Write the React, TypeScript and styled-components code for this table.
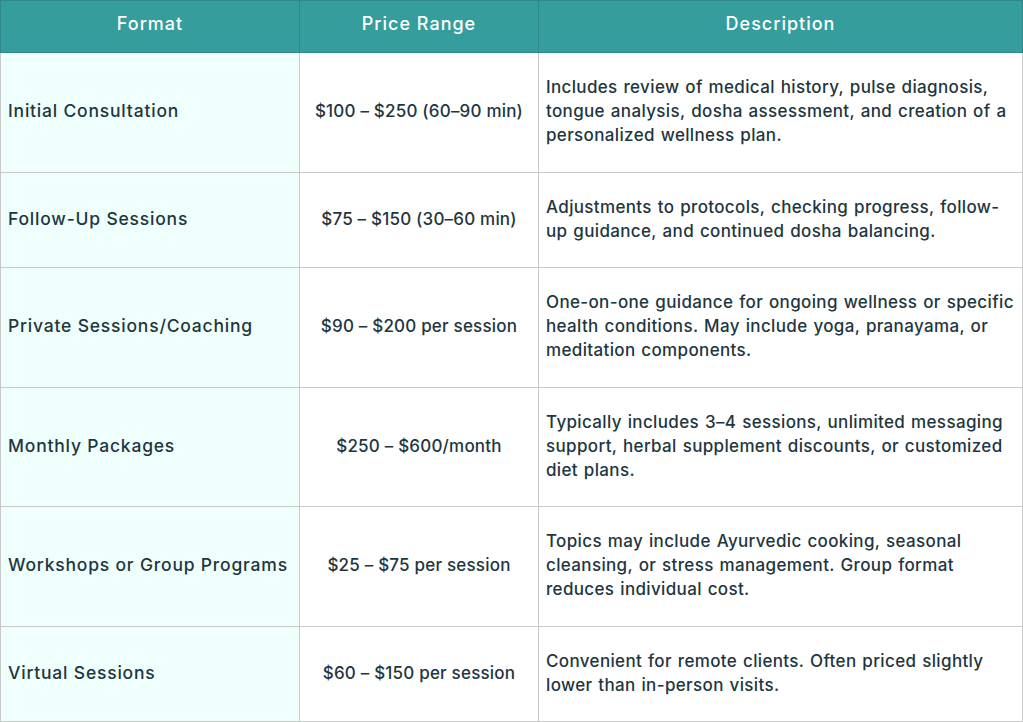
import React from "react";
import styled, { createGlobalStyle } from "styled-components";

const GlobalStyle = createGlobalStyle`
    body {
        margin: 0;
        background: #ffffff;
        font-family: Inter, "Noto Sans", sans-serif;
    }
`;

const Table = styled.table`
    width: 1022px;
    border-collapse: collapse;
    table-layout: fixed;
    color: #1e3640;
    font-weight: 500;
    line-height: 24px;
`;

const HeadCell = styled.th<{ $w: number }>`
    width: ${(p) => p.$w}px;
    height: 52px;
    box-sizing: border-box;
    padding: 0 8px 6px;
    background: #359d9b;
    color: #ffffff;
    font-weight: 500;
    font-size: 18px;
    letter-spacing: 1px;
    text-align: center;
    border: 1px solid #2e8886;
`;

const Cell = styled.td<{ $kind: "name" | "price" | "desc" }>`
    padding: 22px 7px 24.5px;
    border: 1px solid #c9c9c9;
    vertical-align: middle;
    white-space: ${(p) => (p.$kind === "desc" ? "nowrap" : "normal")};
    background: ${(p) => (p.$kind === "name" ? "#effffc" : "#ffffff")};
    text-align: ${(p) => (p.$kind === "price" ? "center" : "left")};
    font-size: ${(p) => (p.$kind === "name" ? "17.5px" : "17px")};
    letter-spacing: ${(p) => (p.$kind === "price" ? "0.2px" : p.$kind === "name" ? "0.8px" : "0.35px")};
    word-spacing: ${(p) => (p.$kind === "desc" ? "1px" : "0")};
`;

const rows = [
    {
        name: "Initial Consultation",
        price: "$100 – $250 (60–90 min)",
        desc: [
            "Includes review of medical history, pulse diagnosis,",
            "tongue analysis, dosha assessment, and creation of a",
            "personalized wellness plan.",
        ],
    },
    {
        name: "Follow-Up Sessions",
        price: "$75 – $150 (30–60 min)",
        desc: [
            "Adjustments to protocols, checking progress, follow-",
            "up guidance, and continued dosha balancing.",
        ],
    },
    {
        name: "Private Sessions/Coaching",
        price: "$90 – $200 per session",
        desc: [
            "One-on-one guidance for ongoing wellness or specific",
            "health conditions. May include yoga, pranayama, or",
            "meditation components.",
        ],
    },
    {
        name: "Monthly Packages",
        price: "$250 – $600/month",
        desc: [
            "Typically includes 3–4 sessions, unlimited messaging",
            "support, herbal supplement discounts, or customized",
            "diet plans.",
        ],
    },
    {
        name: "Workshops or Group Programs",
        price: "$25 – $75 per session",
        desc: [
            "Topics may include Ayurvedic cooking, seasonal",
            "cleansing, or stress management. Group format",
            "reduces individual cost.",
        ],
    },
    {
        name: "Virtual Sessions",
        price: "$60 – $150 per session",
        desc: [
            "Convenient for remote clients. Often priced slightly",
            "lower than in-person visits.",
        ],
    },
];

const App = () => {
    return (
        <>
            <GlobalStyle />
            <Table>
                <thead>
                    <tr>
                        <HeadCell $w={299}>Format</HeadCell>
                        <HeadCell $w={239}>Price Range</HeadCell>
                        <HeadCell $w={484}>Description</HeadCell>
                    </tr>
                </thead>
                <tbody>
                    {rows.map((row) => (
                        <tr key={row.name}>
                            <Cell $kind="name">{row.name}</Cell>
                            <Cell $kind="price">{row.price}</Cell>
                            <Cell $kind="desc">
                                {row.desc.map((line, i) => (
                                    <React.Fragment key={i}>
                                        {i > 0 && <br />}
                                        {line}
                                    </React.Fragment>
                                ))}
                            </Cell>
                        </tr>
                    ))}
                </tbody>
            </Table>
        </>
    );
};

export default App;
